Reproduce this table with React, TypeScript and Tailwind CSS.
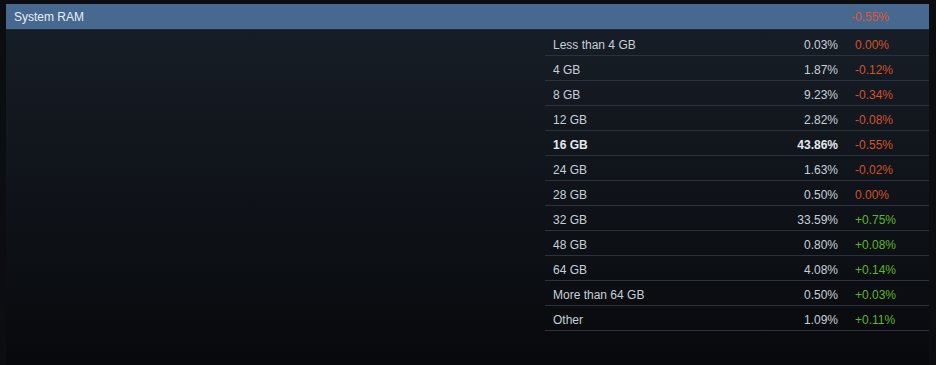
import React from 'react'

type Row = { label: string; pct: string; change: string; bold?: boolean }

const rows: Row[] = [
  { label: 'Less than 4 GB', pct: '0.03%', change: '0.00%' },
  { label: '4 GB', pct: '1.87%', change: '-0.12%' },
  { label: '8 GB', pct: '9.23%', change: '-0.34%' },
  { label: '12 GB', pct: '2.82%', change: '-0.08%' },
  { label: '16 GB', pct: '43.86%', change: '-0.55%', bold: true },
  { label: '24 GB', pct: '1.63%', change: '-0.02%' },
  { label: '28 GB', pct: '0.50%', change: '0.00%' },
  { label: '32 GB', pct: '33.59%', change: '+0.75%' },
  { label: '48 GB', pct: '0.80%', change: '+0.08%' },
  { label: '64 GB', pct: '4.08%', change: '+0.14%' },
  { label: 'More than 64 GB', pct: '0.50%', change: '+0.03%' },
  { label: 'Other', pct: '1.09%', change: '+0.11%' },
]

export default function App() {
  return (
    <div className="min-h-[365px] bg-[#0b0d10] pt-[4px] pl-[6px] pr-[7px] text-[12px] font-['Liberation_Sans',Arial,sans-serif]">
      <div className="flex h-[26px] items-center border-b border-[#1e2a38] bg-[#47698f] pt-px text-[#e6eef5]">
        <span className="flex-1 pl-[8px]">System RAM</span>
        <span className="w-[78px] text-[#e0552e]">-0.55%</span>
      </div>

      <div className="flex min-h-[335px] bg-gradient-to-b from-[#171d26] via-[#0f1319] to-[#08090c]">
        <div className="flex-1" />
        {/* stats table */}
        <div className="w-[384px] pt-px">
          {rows.map((r) => {
            const changeColor = r.change.startsWith('+') ? 'text-[#5fb62a]' : 'text-[#d2522a]'
            return (
              <div
                key={r.label}
                className={`flex h-[25px] items-center border-b border-[#2b323c] pt-[3px] ${r.bold ? 'font-bold text-[#e3e9ee]' : 'text-[#c6d0d8]'}`}
              >
                <span className="flex-1 pl-[8px]">{r.label}</span>
                <span className="text-right">{r.pct}</span>
                <span className={`w-[91px] pl-[17px] font-normal ${changeColor}`}>{r.change}</span>
              </div>
            )
          })}
        </div>
      </div>
    </div>
  )
}
